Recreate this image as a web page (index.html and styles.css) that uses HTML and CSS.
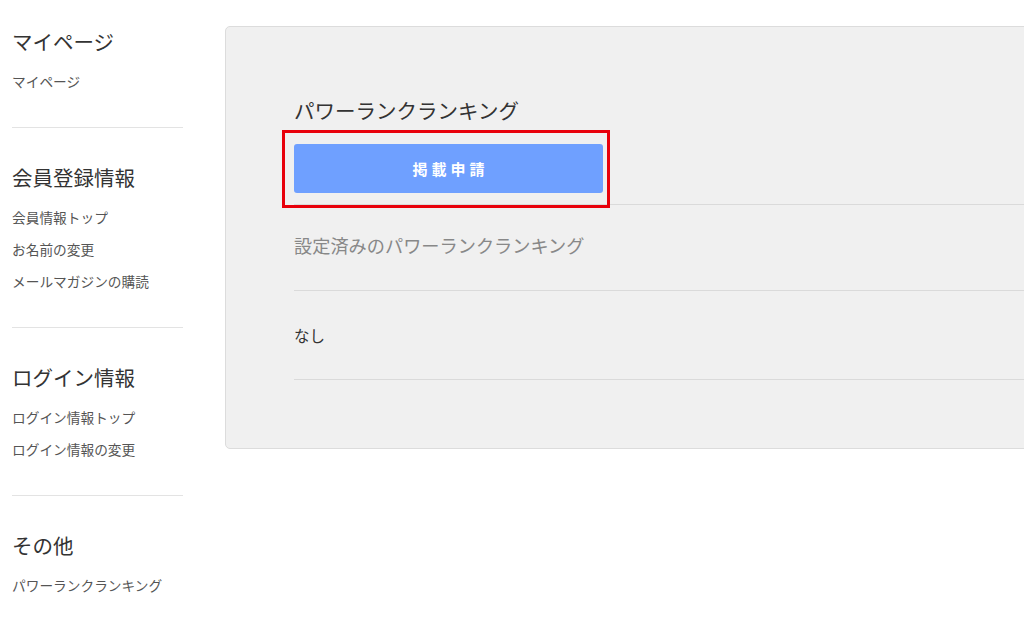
FILE: index.html
```html
<!DOCTYPE html>
<html lang="ja">

<head>
    <meta charset="UTF-8">
    <meta name="viewport" content="width=device-width, initial-scale=1.0">
    <title>パワーランクランキング</title>
    <link rel="stylesheet" href="styles.css">
</head>

<body>

    <div class="page">
        <div class="side">
            <div class="side-group">
                <p class="side-title">マイページ</p>
                <a class="side-link" href="#">マイページ</a>
            </div>
            <div class="side-group">
                <p class="side-title">会員登録情報</p>
                <a class="side-link" href="#">会員情報トップ</a>
                <a class="side-link" href="#">お名前の変更</a>
                <a class="side-link" href="#">メールマガジンの購読</a>
            </div>
            <div class="side-group">
                <p class="side-title">ログイン情報</p>
                <a class="side-link" href="#">ログイン情報トップ</a>
                <a class="side-link" href="#">ログイン情報の変更</a>
            </div>
            <div class="side-group last">
                <p class="side-title">その他</p>
                <a class="side-link" href="#">パワーランクランキング</a>
            </div>
        </div>

        <div class="main">
            <div class="card">
                <div class="card-head">
                    <p class="card-title">パワーランクランキング</p>
                    <div class="btn-wrap">
                        <button class="apply-btn">掲載申請</button>
                        <span class="mark"></span>
                    </div>
                </div>
                <div class="row row-label">設定済みのパワーランクランキング</div>
                <div class="row row-value">なし</div>
            </div>
        </div>
    </div>

</body>

</html>
```

FILE: styles.css
```css
body {
    margin: 0;
    background-color: #fff;
    font-family: "Noto Sans CJK JP", "Noto Sans", sans-serif;
    color: #333;
    overflow: hidden;
}

p {
    margin: 0;
}

.page {
    display: flex;
    align-items: flex-start;
}

/* sidebar */

.side {
    width: 171px;
    margin-left: 12px;
    flex-shrink: 0;
}

.side-group {
    padding: 27px 0 30px;
    border-bottom: 1px solid #e3e3e3;
}

.side-group+.side-group {
    padding-top: 35px;
}

.side-group.last {
    border-bottom: none;
}

.side-title {
    font-size: 20.5px;
    line-height: 28px;
    color: #333;
    margin-bottom: 10px;
}

.side-link {
    display: block;
    font-size: 13.7px;
    line-height: 32px;
    color: #555;
    text-decoration: none;
    white-space: nowrap;
}

/* main card */

.main {
    flex: 1;
    margin-left: 42px;
    margin-right: -40px;
    padding-top: 26px;
}

.card {
    background-color: #f0f0f0;
    border: 1px solid #dcdcdc;
    border-radius: 5px;
    padding: 68px 0 68px 68px;
}

.card-head {
    padding-bottom: 11px;
    border-bottom: 1px solid #dadada;
}

.card-title {
    font-size: 20.5px;
    line-height: 30px;
    color: #333;
    margin-bottom: 19px;
}

.btn-wrap {
    position: relative;
    width: 309px;
    height: 49px;
}

.apply-btn {
    display: block;
    width: 100%;
    height: 100%;
    border: none;
    border-radius: 3px;
    background-color: #6fa0ff;
    color: #fff;
    font-family: inherit;
    font-size: 15px;
    font-weight: bold;
    letter-spacing: 4px;
    padding: 0 0 0 4px;
}

.mark {
    position: absolute;
    left: -12px;
    right: -7px;
    top: -14px;
    bottom: -15px;
    border: 3px solid #e8000b;
    pointer-events: none;
}

.row {
    border-bottom: 1px solid #dadada;
}

.row-label {
    font-size: 18.2px;
    line-height: 26px;
    color: #888;
    padding: 27px 0 32px;
}

.row-value {
    font-size: 15.5px;
    line-height: 24px;
    color: #333;
    padding: 32px 0 32px;
}
```
